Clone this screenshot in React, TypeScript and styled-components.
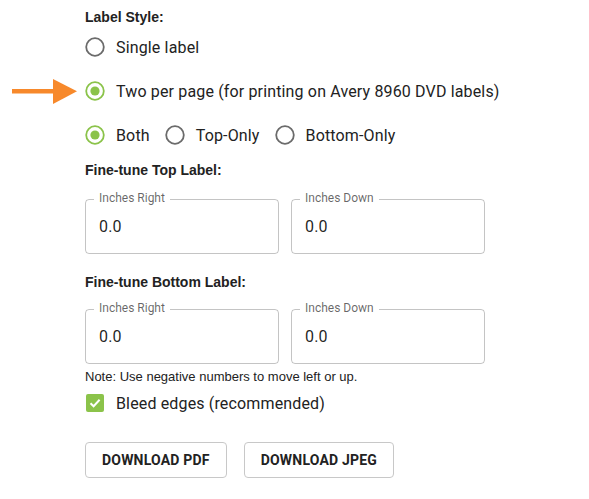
import * as React from "react";
import styled, { createGlobalStyle } from "styled-components";

const GREEN = "#8bc34a";

const GlobalStyle = createGlobalStyle`
	body {
		margin: 0;
		background: #ffffff;
		font-family: Roboto, "Liberation Sans", Arial, sans-serif;
		color: rgba(0, 0, 0, 0.87);
	}
`;

export default function App() {
	const [style, setStyle] = React.useState("two");
	const [which, setWhich] = React.useState("both");
	const [bleed, setBleed] = React.useState(true);

	return (
		<StyledPage>
			<GlobalStyle />
			<SectionTitle>Label Style:</SectionTitle>
			<RadioColumn>
				<Option>
					<Radio checked={style === "single"} onClick={() => setStyle("single")} />
					<OptionText>Single label</OptionText>
				</Option>
				<Option>
					<Arrow />
					<Radio checked={style === "two"} onClick={() => setStyle("two")} />
					<OptionText>Two per page (for printing on Avery 8960 DVD labels)</OptionText>
				</Option>
				<Option>
					<Radio checked={which === "both"} onClick={() => setWhich("both")} />
					<OptionText>Both</OptionText>
					<Radio checked={which === "top"} onClick={() => setWhich("top")} />
					<OptionText>Top-Only</OptionText>
					<Radio checked={which === "bottom"} onClick={() => setWhich("bottom")} />
					<OptionText>Bottom-Only</OptionText>
				</Option>
			</RadioColumn>

			<SectionTitle $top={6}>Fine-tune Top Label:</SectionTitle>
			<FieldRow $top={21}>
				<OutlinedField label="Inches Right" value="0.0" />
				<OutlinedField label="Inches Down" value="0.0" />
			</FieldRow>

			<SectionTitle $top={21}>Fine-tune Bottom Label:</SectionTitle>
			<FieldRow $top={19}>
				<OutlinedField label="Inches Right" value="0.0" />
				<OutlinedField label="Inches Down" value="0.0" />
			</FieldRow>
			<Note>Note: Use negative numbers to move left or up.</Note>

			<CheckRow onClick={() => setBleed(!bleed)}>
				<CheckBox $checked={bleed}>
					{bleed && (
						<svg width="14" height="14" viewBox="0 0 14 14">
							<path d="M2.5 7.2 L5.6 10.2 L11.6 3.8" fill="none" stroke="#fff" strokeWidth="2" />
						</svg>
					)}
				</CheckBox>
				<OptionText>Bleed edges (recommended)</OptionText>
			</CheckRow>

			<ButtonRow>
				<DownloadButton>Download PDF</DownloadButton>
				<DownloadButton>Download JPEG</DownloadButton>
			</ButtonRow>
		</StyledPage>
	);
}

function Radio(props: { checked: boolean; onClick: () => void }) {
	const color = props.checked ? GREEN : "#6b6b6b";
	return (
		<RadioIcon onClick={props.onClick}>
			<svg width="20" height="20" viewBox="0 0 20 20">
				<circle cx="10" cy="10" r="8.8" fill="none" stroke={color} strokeWidth="1.8" />
				{props.checked && <circle cx="10" cy="10" r="4.6" fill={color} />}
			</svg>
		</RadioIcon>
	);
}

function OutlinedField(props: { label: string; value: string }) {
	return (
		<FieldBox>
			<FieldLabel>{props.label}</FieldLabel>
			<FieldInput defaultValue={props.value} />
		</FieldBox>
	);
}

function Arrow() {
	return (
		<ArrowMark width="70" height="28" viewBox="0 0 70 28">
			<rect x="0" y="10" width="42" height="4.5" fill="#f7892b" />
			<polygon points="41,0 65,12.3 41,25" fill="#f7892b" />
		</ArrowMark>
	);
}

const StyledPage = styled.div`
	position: relative;
	padding: 10px 0 20px 85px;
	display: flex;
	flex-direction: column;
	align-items: flex-start;
`;

const SectionTitle = styled.div<{ $top?: number }>`
	margin-top: ${(p) => p.$top || 0}px;
	font-family: "Liberation Sans", Arial, sans-serif;
	font-size: 14px;
	font-weight: 700;
	line-height: 15px;
	color: #222;
`;

const RadioColumn = styled.div`
	display: flex;
	flex-direction: column;
`;

const Option = styled.div`
	position: relative;
	height: 44px;
	display: flex;
	align-items: center;
`;

const RadioIcon = styled.span`
	display: inline-flex;
	width: 20px;
	height: 20px;
	margin-right: 11px;
	cursor: pointer;
	& + span {
		margin-right: 15px;
	}
`;

const OptionText = styled.span`
	font-size: 16px;
	letter-spacing: 0.15px;
	color: #222;
	white-space: nowrap;
`;

const ArrowMark = styled.svg`
	position: absolute;
	left: -73px;
	top: 10px;
`;

const FieldRow = styled.div<{ $top: number }>`
	margin-top: ${(p) => p.$top}px;
	display: flex;
	gap: 12px;
`;

const FieldBox = styled.div`
	position: relative;
	width: 192px;
	height: 53px;
	border: 1px solid rgba(0, 0, 0, 0.23);
	border-radius: 4px;
	display: flex;
	align-items: center;
`;

const FieldLabel = styled.span`
	position: absolute;
	left: 8px;
	top: -10px;
	padding: 0 5px;
	background: #fff;
	font-size: 12px;
	line-height: 16px;
	color: rgba(0, 0, 0, 0.6);
`;

const FieldInput = styled.input`
	width: 100%;
	height: 100%;
	box-sizing: border-box;
	padding: 0 13px;
	border: none;
	outline: none;
	background: transparent;
	font-family: Roboto, "Liberation Sans", Arial, sans-serif;
	font-size: 16px;
	letter-spacing: 0.15px;
	color: rgba(0, 0, 0, 0.87);
`;

const Note = styled.div`
	margin-top: 5px;
	font-family: "Liberation Sans", Arial, sans-serif;
	font-size: 13px;
	line-height: 16px;
	color: #222;
`;

const CheckRow = styled.div`
	margin-top: 2px;
	height: 32px;
	display: flex;
	align-items: center;
	cursor: pointer;
`;

const CheckBox = styled.span<{ $checked: boolean }>`
	width: 18px;
	height: 18px;
	margin: 0 12px 0 1px;
	border-radius: 2px;
	box-sizing: border-box;
	display: inline-flex;
	align-items: center;
	justify-content: center;
	background: ${(p) => (p.$checked ? GREEN : "transparent")};
	border: ${(p) => (p.$checked ? "none" : "2px solid #6b6b6b")};
`;

const ButtonRow = styled.div`
	margin-top: 23px;
	display: flex;
	gap: 17px;
`;

const DownloadButton = styled.button`
	height: 36px;
	padding: 0 16px;
	background: #fff;
	border: 1px solid #c8c8c8;
	border-radius: 4px;
	font-family: Roboto, "Liberation Sans", Arial, sans-serif;
	font-size: 14px;
	font-weight: 700;
	letter-spacing: 0.2px;
	text-transform: uppercase;
	color: #222;
	cursor: pointer;
`;
